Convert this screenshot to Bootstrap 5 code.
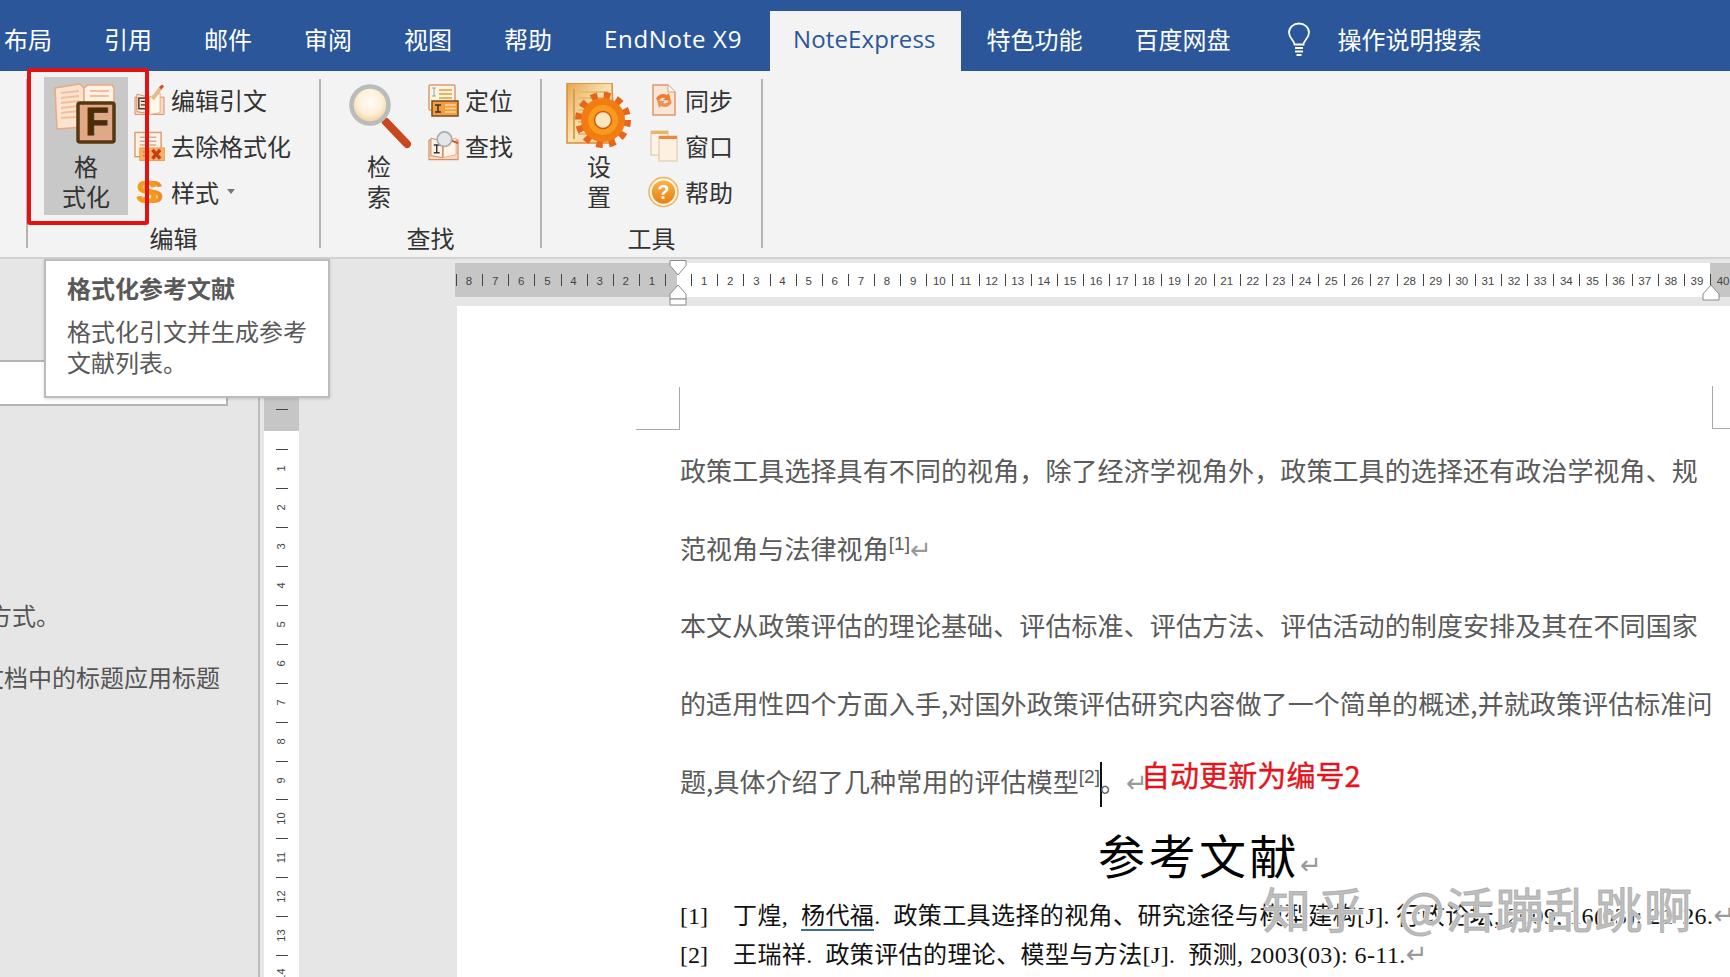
<!DOCTYPE html>
<html lang="zh-CN">
<head>
  <meta charset="UTF-8">
  <title>NoteExpress</title>
  <link href="https://cdn.jsdelivr.net/npm/bootstrap@5.3.3/dist/css/bootstrap.min.css" rel="stylesheet">
  <style>
    html, body { height: 100%; overflow: hidden; }
    body { font-family: "Noto Sans CJK SC", "Open Sans", sans-serif; background: #e6e6e6; color: #333; }
    .app { width: 1730px; height: 977px; }

    /* tabs */
    .word-tabs { height: 71px; padding: 11px 0 0 0; background: #2b579a; flex-wrap: nowrap; margin-left: -22px; }
    .word-tabs .nav-link { height: 60px; padding: 0 26px 4px; display: flex; align-items: center; color: #fff; font-size: 24px; line-height: 1; }
    .word-tabs .nav-link.active { background: #f3f3f3; color: #2b579a; padding: 0 25px 4px 23px; margin: 0 0 0 2px; letter-spacing: .1px; }
    .word-tabs .latin { font-family: "Open Sans", sans-serif; }
    .word-tabs .wide-latin { letter-spacing: .7px; }
    .tell-gap { padding-left: 30px; }
    .tell-gap svg { margin-right: 27px; }

    /* ribbon */
    .ribbon { height: 188px; background: #f3f3f3; border-bottom: 2px solid #d2d2d2; padding: 8px 0 0 26px; }
    .rib-group { height: 169px; border-right: 2px solid #b4b4b4; flex: none; }
    .rib-group.first { border-left: 2px solid #b4b4b4; }
    .rib-body { margin-top: -2px; height: 138px; }
    .rib-label { margin-top: 8px; height: 30px; line-height: 30px; text-align: center; font-size: 24px; }
    .big-btn { width: 84px; height: 138px; font-size: 24px; line-height: 30px; text-align: center; }
    .big-btn.hot { background: #c8c8c8; }
    .big-ico { height: 74px; padding-top: 6px; }
    .small-list { padding-top: 0; }
    .small-item { height: 46px; font-size: 24px; gap: 6px; white-space: nowrap; }
    .small-ico { width: 31px; flex: none; display: flex; justify-content: center; }
    .s-mark { font: 700 32px/32px "Liberation Sans", sans-serif; color: #f39a1e; text-shadow: 6px 0 0 #ee8f1a; margin-left: -5px; -webkit-text-stroke: .8px #f39a1e; }
    .caret-mark { width: 0; height: 0; margin-left: 2px; margin-top: -2px; border: 4.5px solid transparent; border-top: 5px solid #777; border-bottom: 0; }
    .g1 { width: 295px; }
    .g1 .rib-body { padding-left: 16px; }
    .g1 .small-list { margin-left: 6px; }
    .g2, .g3 { width: 221px; }
    .g2 .rib-body { padding-left: 23px; }
    .g3 .rib-body { padding-left: 22px; }
    .g2 .big-btn, .g3 .big-btn { width: 70px; }
    .g2 .small-list, .g3 .small-list { margin-left: 14px; }
    .red-box { left: 27px; top: 68px; width: 122px; height: 157px; border: 4px solid #e01212; border-radius: 3px; }

    /* tooltip */
    .tip-box { left: 44px; top: 259px; width: 286px; height: 139px; background: #fff; border: 2px solid #bcbcbc; box-shadow: 0 1px 3px rgba(0,0,0,.15); padding: 11px 0 0 21px; color: #595959; font-size: 24px; line-height: 31px; }
    .tip-title { font-weight: 700; margin-bottom: 12px; }

    /* left pane + vertical ruler */
    .work { height: 718px; }
    .left-pane { width: 260px; border-right: 2px solid #bdbdbd; color: #555; font-size: 24px; line-height: 34px; }
    .search-field { width: 228px; height: 46px; margin-top: 101px; background: #fff; border: 2px solid #b4b4b4; border-left: 0; }
    .pane-line { white-space: nowrap; }
    .pane-a { margin: 192px 0 0 -12px; }
    .pane-b { margin: 28px 0 0 -20px; }
    .rul-v { width: 35px; margin-left: 4px; background: #fff; flex: none; }
    .rul-v-off { height: 172px; background: #c6c6c6; padding-bottom: 21px; }
    .tick-h { width: 12px; height: 1px; background: #444; flex: none; }
    .rul-v-cell { height: 38.95px; }
    .rul-v-cell span { font: 11px/19px "Liberation Sans", sans-serif; color: #444; transform: rotate(-90deg); margin-top: 9px; }
    .rul-v-nums { padding-top: 18px; }

    /* document column */
    .doc-col { flex: 1; min-width: 0; margin-left: 156px; }
    .rul-h { height: 34px; margin-top: 4px; padding-left: 1px; background: linear-gradient(to right, #c6c6c6 222px, #fff 222px, #fff 1255px, #c6c6c6 1255px); font: 11.5px/36px "Liberation Sans", sans-serif; color: #444; flex: none; }
    .rul-h-cell { width: 26.13px; flex: none; text-align: center; position: relative; }
    .rul-h-cell::before { content: ""; position: absolute; left: 0; top: 11px; height: 12px; border-left: 1px solid #444; }
    .marker { pointer-events: none; }
    .page-sheet { flex: 1; margin: 9px 0 0 2px; background: #fff; padding: 125px 18px 0 223px; color: #111; }
    .crop-l { left: 179px; top: 81px; width: 44px; height: 43px; border-right: 1px solid #aaa; border-bottom: 1px solid #aaa; }
    .crop-r { left: 1255px; top: 80px; width: 20px; height: 43px; border-left: 1px solid #aaa; border-bottom: 1px solid #aaa; }
    .body-line { height: 77.5px; line-height: 77.5px; font-size: 26px; letter-spacing: .1px; color: #5a5a5a; white-space: nowrap; }
    .cite { font: 19px "Liberation Sans", sans-serif; vertical-align: 9px; letter-spacing: 0; }
    .ret { font: 26px/1 "DejaVu Sans", sans-serif; color: #999; letter-spacing: 0; }
    .caret-line { display: inline-block; width: 2px; height: 45px; background: #111; vertical-align: middle; margin-right: -2px; }
    .note-red { font-size: 29px; color: #e4141c; -webkit-text-stroke: .4px #e4141c; position: relative; top: -5px; margin-left: -7px; }
    .ref-title { height: 74px; line-height: 74px; margin-top: 2px; text-align: center; font-family: "Liberation Serif", "Noto Sans CJK SC", serif; font-size: 47px; letter-spacing: 3.5px; color: #000; padding-left: 28px; white-space: nowrap; }
    .ref-line { height: 39px; line-height: 39px; font-family: "Liberation Serif", "Noto Sans CJK SC", serif; font-size: 24px; letter-spacing: .4px; white-space: nowrap; color: #111; }
    .ref-first { margin-top: 2px; }
    .ref-no { display: inline-block; width: 53px; letter-spacing: 0; }
    .ref-auth { border-bottom: 2px solid #3f6f8f; }
    .mark-wm { left: 1263px; top: 872px; font-size: 48px; line-height: 70px; letter-spacing: 1.5px; color: rgba(165,165,165,.72); -webkit-text-stroke: 1px rgba(165,165,165,.72); text-shadow: 0 0 2px #fff, 1px 1px 1px #fff, -1px -1px 1px #fff; white-space: nowrap; }
    .mark-wm b { font-weight: 400; margin-right: 28px; letter-spacing: 6px; }
  </style>
</head>
<body>
  <div class="app position-relative d-flex flex-column overflow-hidden">

    <!-- tabs -->
    <ul class="nav word-tabs">
      <li class="nav-item"><a class="nav-link" href="#">布局</a></li>
      <li class="nav-item"><a class="nav-link" href="#">引用</a></li>
      <li class="nav-item"><a class="nav-link" href="#">邮件</a></li>
      <li class="nav-item"><a class="nav-link" href="#">审阅</a></li>
      <li class="nav-item"><a class="nav-link" href="#">视图</a></li>
      <li class="nav-item"><a class="nav-link" href="#">帮助</a></li>
      <li class="nav-item"><a class="nav-link latin wide-latin" href="#">EndNote X9</a></li>
      <li class="nav-item"><a class="nav-link active latin" href="#">NoteExpress</a></li>
      <li class="nav-item"><a class="nav-link" href="#">特色功能</a></li>
      <li class="nav-item"><a class="nav-link" href="#">百度网盘</a></li>
      <li class="nav-item tell-gap"><a class="nav-link px-0" href="#">
        <svg width="24" height="34" viewBox="0 0 24 34" fill="none" stroke="#fff" stroke-width="1.8"><path d="M7.5 22.5c0-4-5.5-6-5.500-12C2 5.500 6.500 1.500 12 1.500S22 5.500 22 10.500c0 6-5.500 8-5.500 12z"/><path d="M8 26h8M8 29.500h8"/><path d="M9.500 33h5" stroke-width="2"/></svg>
        操作说明搜索</a></li>
    </ul>

    <!-- ribbon -->
    <div class="ribbon d-flex flex-none">
      <div class="rib-group first g1">
        <div class="rib-body d-flex">
          <div class="big-btn hot">
            <div class="big-ico d-flex justify-content-center">
              <svg width="64" height="62" viewBox="0 0 64 62">
                <path d="M1 5 L26 1 L30 5 L30 44 L3 46 Z" fill="#fbe3d0" stroke="#eaa981" stroke-width="1.500"/>
                <path d="M30 5 L34 2 L58 2 L60 5 L60 20 L30 40 Z" fill="#fdf0e4" stroke="#eaa981" stroke-width="1.500"/>
                <path d="M7 10l18-2M7 15l18-2M7 20l18-2M7 25l18-2M7 30l17-2M7 35l15-1M36 8h19M36 13h19" stroke="#f2bf9b" stroke-width="2"/>
                <rect x="24" y="20" width="36" height="39" rx="2" fill="#dfa987" stroke="#57370f" stroke-width="3.500"/>
                <text x="43" y="52" text-anchor="middle" font-family="Liberation Sans" font-weight="700" font-size="38" fill="#4a2c08" stroke="#4a2c08" stroke-width="1">F</text>
              </svg>
            </div>
            格<br>式化
          </div>
          <div class="small-list">
            <div class="small-item d-flex align-items-center">
              <span class="small-ico"><svg width="32" height="33" viewBox="0 0 32 33">
                <path d="M1 13h30v18H1z" fill="#f7d9c4" stroke="#d98e68"/>
                <path d="M3 10l12 3v17L3 28z" fill="#fdf1e6" stroke="#c98a62"/>
                <path d="M16 13l11-4v20l-11 2z" fill="#fff6ec" stroke="#e3b08e"/>
                <rect x="5" y="14" width="9" height="11" fill="#fbe5cf" stroke="#4a3a2a" stroke-width="1.500"/>
                <path d="M7 17.500h5M7 21h5" stroke="#4a3a2a" stroke-width="1.300"/>
                <path d="M19 15L28 3" stroke="#e9b980" stroke-width="4"/>
                <path d="M27 4l3-3" stroke="#d2483a" stroke-width="3"/>
              </svg></span>编辑引文
            </div>
            <div class="small-item d-flex align-items-center">
              <span class="small-ico"><svg width="32" height="31" viewBox="0 0 32 31">
                <rect x="1" y="1" width="27" height="25" fill="#fdf1e6" stroke="#dd9a72" stroke-width="1.500"/>
                <path d="M6 6h17M6 10h17M6 14h17" stroke="#c4b29f" stroke-width="1.500"/>
                <rect x="6" y="17" width="26" height="13" fill="#f7b266" stroke="#eb9a4a"/>
                <path d="M19 19l8 9M27 19l-8 9" stroke="#cc3a12" stroke-width="3.500"/>
                <path d="M9 21h7M9 25h7" stroke="#e08a3c" stroke-width="2"/>
              </svg></span>去除格式化
            </div>
            <div class="small-item d-flex align-items-center">
              <span class="small-ico"><span class="s-mark">S</span></span>样式<span class="caret-mark"></span>
            </div>
          </div>
        </div>
        <div class="rib-label">编辑</div>
      </div>

      <div class="rib-group g2">
        <div class="rib-body d-flex">
          <div class="big-btn">
            <div class="big-ico d-flex justify-content-center">
              <svg width="66" height="66" viewBox="0 0 66 66">
                <defs>
                  <radialGradient id="lens" cx=".5" cy=".42" r=".6"><stop offset="0" stop-color="#fffdf8"/><stop offset=".55" stop-color="#fdf0d8"/><stop offset="1" stop-color="#f0c88a"/></radialGradient>
                </defs>
                <line x1="40" y1="39" x2="61" y2="61" stroke="#c9471d" stroke-width="8" stroke-linecap="round"/>
                <circle cx="24" cy="22" r="18.500" fill="url(#lens)" stroke="#b9bcbb" stroke-width="4.500"/>
              </svg>
            </div>
            检<br>索
          </div>
          <div class="small-list">
            <div class="small-item d-flex align-items-center">
              <span class="small-ico"><svg width="31" height="33" viewBox="0 0 31 33">
                <rect x="1" y="1" width="26" height="25" rx="1" fill="#fdf3e3" stroke="#dc9c72" stroke-width="1.500"/>
                <path d="M11 6h13M11 10h13M11 14h13" stroke="#e9b45f" stroke-width="2"/>
                <path d="M4 4h4M6 4v8M4 12h4" stroke="#8aa" fill="none"/>
                <rect x="4" y="17" width="26" height="15" fill="#f69c3c" stroke="#7b4a20" stroke-width="1.500"/>
                <path d="M7 21h6M10 21v7M7 28h6" stroke="#333" stroke-width="1.500" fill="none"/>
                <path d="M17 21h11M17 24.500h11M17 28h11" stroke="#fdd9a3" stroke-width="1.500"/>
              </svg></span>定位
            </div>
            <div class="small-item d-flex align-items-center">
              <span class="small-ico"><svg width="32" height="32" viewBox="0 0 32 32">
                <path d="M1 10h30v20H1z" fill="#f7d9c4" stroke="#d98e68" stroke-width="1.200"/>
                <path d="M3 8l12 3v17L3 26z" fill="#fdf1e6" stroke="#c98a62"/>
                <path d="M16 11l13-3v17l-13 3z" fill="#fff4e8" stroke="#e3b08e"/>
                <path d="M6 15h6M9 15v8M6 23h6" stroke="#333" stroke-width="1.500" fill="none"/>
                <path d="M23 10l8 3" stroke="#d0472a" stroke-width="2"/>
                <circle cx="17" cy="9" r="7.500" fill="#e3e7ea" stroke="#a9adb0" stroke-width="1.800"/>
              </svg></span>查找
            </div>
          </div>
        </div>
        <div class="rib-label">查找</div>
      </div>

      <div class="rib-group g3">
        <div class="rib-body d-flex">
          <div class="big-btn">
            <div class="big-ico d-flex justify-content-center">
              <svg width="68" height="68" viewBox="0 0 68 68">
                <defs>
                  <linearGradient id="setdoc" x1="0" y1="0" x2="1" y2="1"><stop offset="0" stop-color="#e7a650"/><stop offset=".5" stop-color="#fbe3b4"/><stop offset="1" stop-color="#f4c67e"/></linearGradient>
                </defs>
                <path d="M2 0H47L49 60H2Z" fill="url(#setdoc)" stroke="#d98f32" stroke-width="1.500"/>
                <path d="M9 6v50" stroke="#d9a050" stroke-width="2"/>
                <path d="M13 9h30M13 15h30M13 21h30M13 27h25M13 33h18M13 39h15M13 45h13M13 51h11" stroke="#e2bd78" stroke-width="2"/>
                <circle cx="38" cy="37" r="24.500" fill="none" stroke="#e8641a" stroke-width="7" stroke-dasharray="6.500 6.330"/>
                <circle cx="38" cy="37" r="22" fill="#f07c12"/>
                <circle cx="38" cy="37" r="15" fill="#f89a1e"/>
                <circle cx="38" cy="37" r="8.500" fill="#fbe6bd" stroke="#d4570e" stroke-width="1.500"/>
              </svg>
            </div>
            设<br>置
          </div>
          <div class="small-list">
            <div class="small-item d-flex align-items-center">
              <span class="small-ico"><svg width="24" height="32" viewBox="0 0 24 32">
                <path d="M1 1h15l7 7v23H1z" fill="#fbe6d6" stroke="#dd9a72" stroke-width="1.500"/>
                <path d="M16 1v7h7" fill="#fff" stroke="#dd9a72"/>
                <path d="M4 15c2-5 7-6 11-4l2-2 2 8-8-1 2-2c-2-1-5 0-6 3z" fill="#ed7d31"/>
                <path d="M20 18c-2 5-7 6-11 4l-2 2-2-8 8 1-2 2c2 1 5 0 6-3z" fill="#e9935a"/>
              </svg></span>同步
            </div>
            <div class="small-item d-flex align-items-center">
              <span class="small-ico"><svg width="28" height="32" viewBox="0 0 28 32">
                <rect x="1" y="1" width="17" height="24" fill="#fdf3e6" stroke="#d9c29f"/>
                <rect x="1" y="1" width="17" height="3" fill="#e5b765"/>
                <rect x="9" y="6" width="18" height="25" fill="#fdf0e0" stroke="#e0c4a4"/>
                <rect x="9" y="6" width="18" height="3" fill="#f0873a"/>
              </svg></span>窗口
            </div>
            <div class="small-item d-flex align-items-center">
              <span class="small-ico"><svg width="32" height="32" viewBox="0 0 32 32">
                <defs>
                  <linearGradient id="helpfill" x1="0" y1="0" x2="0" y2="1"><stop offset="0" stop-color="#f9b44a"/><stop offset="1" stop-color="#ea7f10"/></linearGradient>
                </defs>
                <circle cx="16" cy="16" r="15" fill="#fff6e6" stroke="#eeb15f" stroke-width="1.500"/>
                <circle cx="16" cy="16" r="12" fill="url(#helpfill)"/>
                <text x="16" y="23" text-anchor="middle" font-family="Liberation Sans" font-weight="700" font-size="20" fill="#fff">?</text>
              </svg></span>帮助
            </div>
          </div>
        </div>
        <div class="rib-label">工具</div>
      </div>
    </div>

    <!-- work area -->
    <div class="work d-flex">
      <div class="left-pane overflow-hidden flex-none">
        <div class="search-field"></div>
        <div class="pane-line pane-a">方式。</div>
        <div class="pane-line pane-b">文档中的标题应用标题</div>
      </div>

      <div class="rul-v">
        <div class="rul-v-off d-flex align-items-end justify-content-center"><div class="tick-h"></div></div>
        <div class="rul-v-nums" id="vruler"></div>
      </div>

      <div class="doc-col d-flex flex-column position-relative">
        <div class="rul-h d-flex" id="hruler"></div>
        <svg class="marker position-absolute" style="left:214px;top:1px" width="18" height="46" viewBox="0 0 18 46" fill="#fff" stroke="#8a8a8a">
          <path d="M1 .5h16v5L9 15 1 5.500z"/>
          <path d="M9 25l8 9v5H1v-5z"/><path d="M1 39h16v6H1z"/>
        </svg>
        <svg class="marker position-absolute" style="left:1247px;top:25px" width="18" height="17" viewBox="0 0 18 17" fill="#fff" stroke="#8a8a8a">
          <path d="M9 1l8 9v6H1v-6z"/>
        </svg>
        <div class="page-sheet position-relative">
          <div class="crop-l position-absolute"></div>
          <div class="crop-r position-absolute"></div>
          <div class="body-line">政策工具选择具有不同的视角，除了经济学视角外，政策工具的选择还有政治学视角、规</div>
          <div class="body-line">范视角与法律视角<span class="cite">[1]</span><span class="ret">↵</span></div>
          <div class="body-line">本文从政策评估的理论基础、评估标准、评估方法、评估活动的制度安排及其在不同国家</div>
          <div class="body-line">的适用性四个方面入手,对国外政策评估研究内容做了一个简单的概述,并就政策评估标准问</div>
          <div class="body-line">题,具体介绍了几种常用的评估模型<span class="cite">[2]</span><span class="caret-line"></span>。<span class="ret">↵</span><span class="note-red">自动更新为编号2</span></div>
          <div class="ref-title">参考文献<span class="ret">↵</span></div>
          <div class="ref-line ref-first"><span class="ref-no">[1]</span>丁煌,&nbsp; <span class="ref-auth">杨代福</span>.&nbsp; 政策工具选择的视角、研究途径与模型建构[J]. 行政论坛, 2009, 16(03): 21-26.<span class="ret">↵</span></div>
          <div class="ref-line"><span class="ref-no">[2]</span>王瑞祥.&nbsp; 政策评估的理论、模型与方法[J].&nbsp; 预测, 2003(03): 6-11.<span class="ret">↵</span></div>
        </div>
      </div>
    </div>

    <!-- overlays -->
    <div class="red-box position-absolute"></div>
    <div class="tip-box position-absolute">
      <div class="tip-title">格式化参考文献</div>
      格式化引文并生成参考<br>文献列表。
    </div>
    <div class="mark-wm position-absolute"><b>知乎</b>@活蹦乱跳啊</div>
  </div>

  <script>
    // ruler numbers
    const hruler = document.getElementById('hruler');
    const marks = [8, 7, 6, 5, 4, 3, 2, 1, ''];
    for (let i = 1; i <= 40; i++) marks.push(i);
    marks.forEach(function (n) {
      const cell = document.createElement('div');
      cell.className = 'rul-h-cell';
      cell.textContent = n;
      hruler.appendChild(cell);
    });

    const vruler = document.getElementById('vruler');
    for (let i = 1; i <= 14; i++) {
      const cell = document.createElement('div');
      cell.className = 'rul-v-cell d-flex flex-column align-items-center';
      cell.innerHTML = '<div class="tick-h"></div><span>' + i + '</span>';
      vruler.appendChild(cell);
    }
  </script>
  <script src="https://cdn.jsdelivr.net/npm/bootstrap@5.3.3/dist/js/bootstrap.bundle.min.js"></script>
</body>
</html>
